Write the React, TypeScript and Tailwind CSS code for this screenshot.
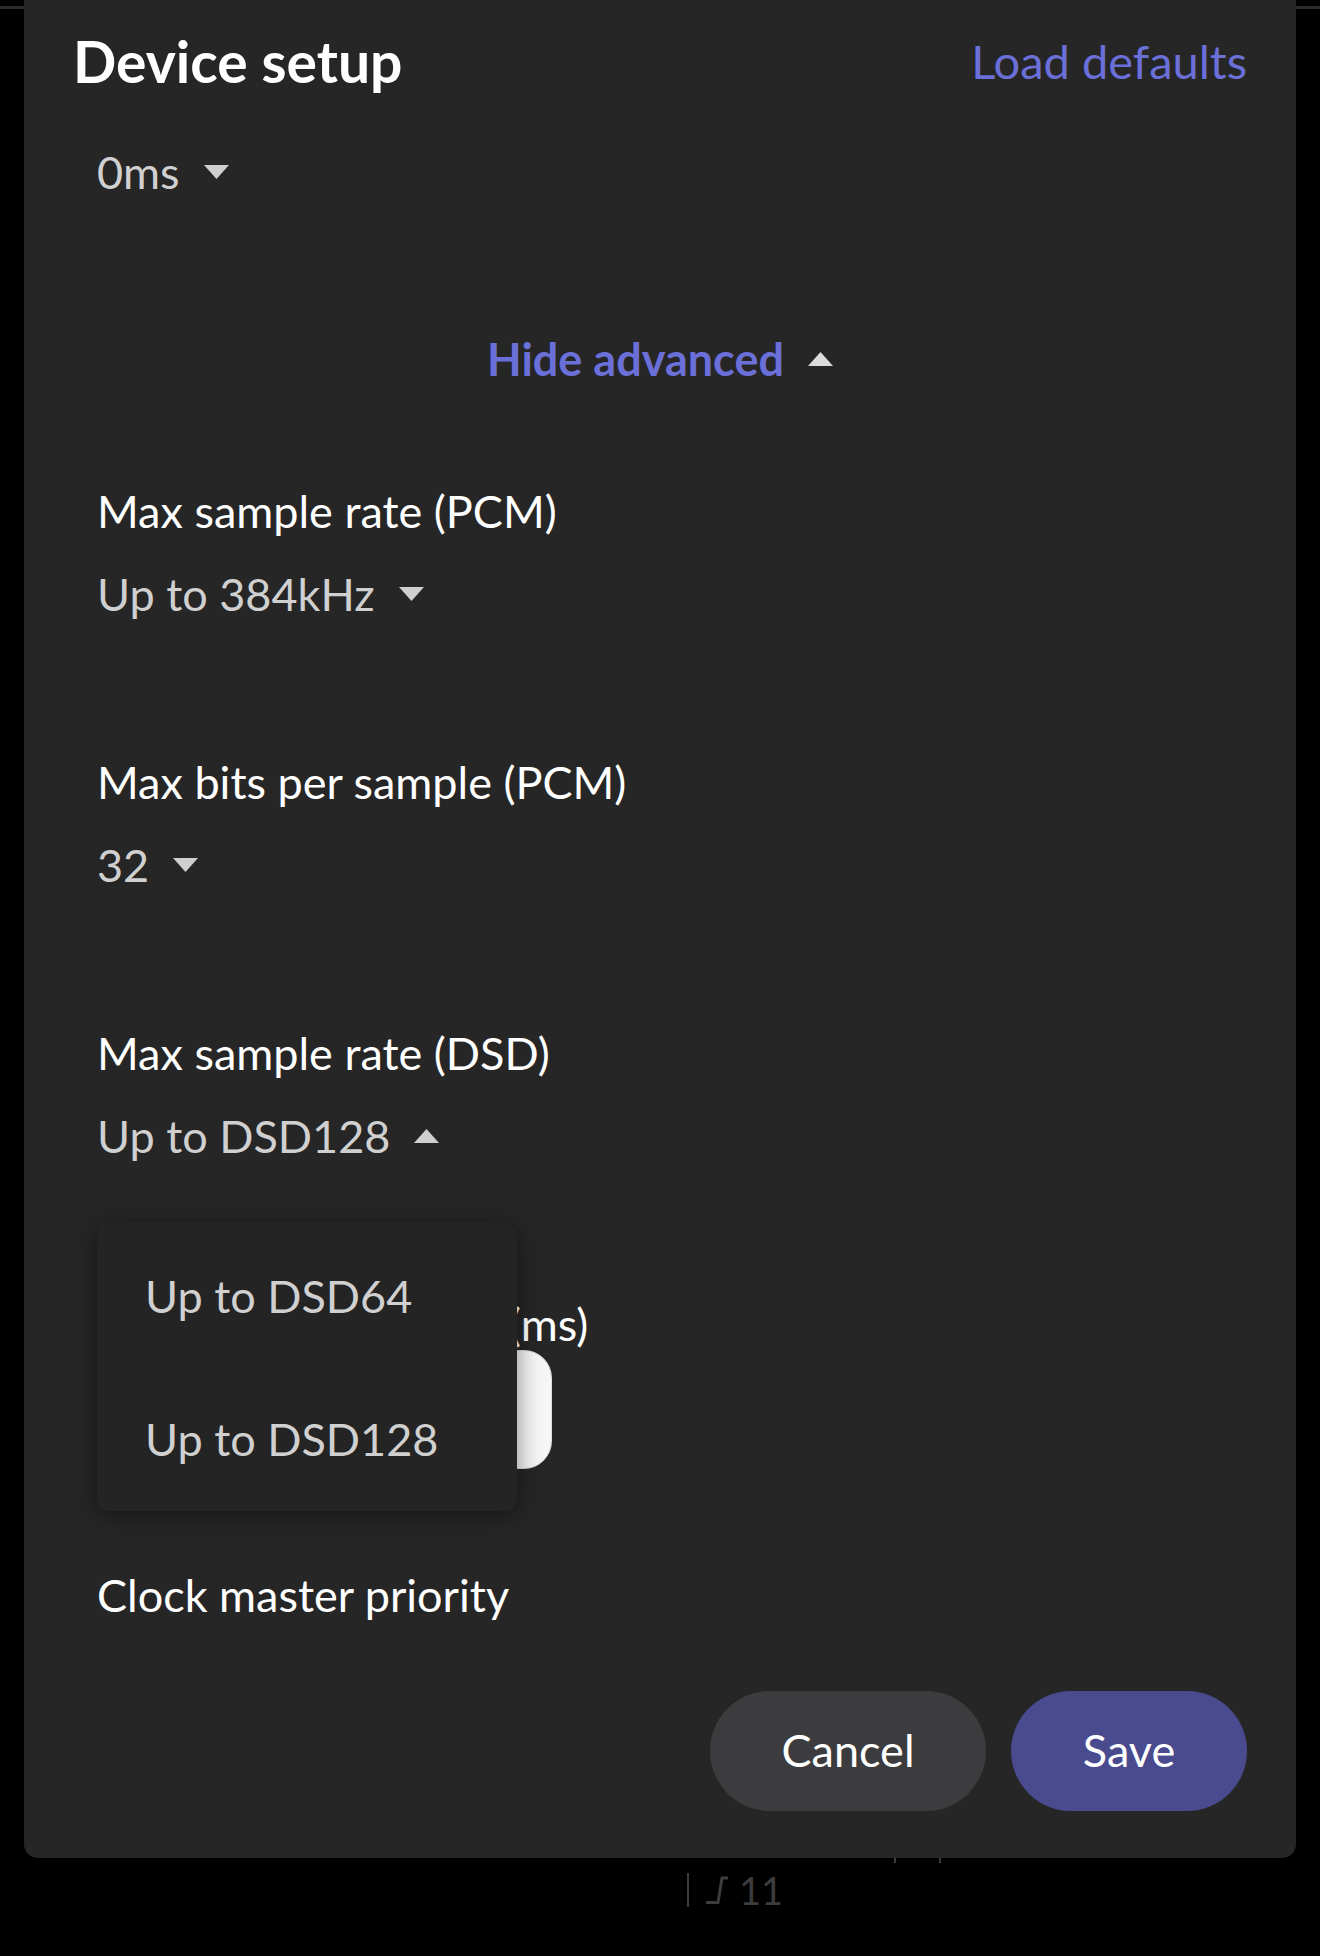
import React from "react";

const sections = [
  { label: "Max sample rate (PCM)", value: "Up to 384kHz", open: false },
  { label: "Max bits per sample (PCM)", value: "32", open: false },
  { label: "Max sample rate (DSD)", value: "Up to DSD128", open: true },
];

function Caret({ up = false }: { up?: boolean }) {
  return (
    <svg width="25" height="14" viewBox="0 0 25 14" className="shrink-0">
      {up ? (
        <polygon points="0,14 25,14 12.5,0" fill="#cfcfcf" />
      ) : (
        <polygon points="0,0 25,0 12.5,14" fill="#cfcfcf" />
      )}
    </svg>
  );
}

export default function App() {
  return (
    <div className="relative min-h-[1956px] w-[1320px] overflow-hidden bg-black font-['Lato','Noto_Sans',sans-serif]">

      {/* background app lines */}
      <div className="absolute left-0 top-[6px] h-[3px] w-[24px] bg-[#2a2a2a]" />
      <div className="absolute right-0 top-[6px] h-[3px] w-[24px] bg-[#2a2a2a]" />

      {/* Modal */}

      <div className="relative ml-[24px] h-[1858px] w-[1272px] rounded-b-[14px] bg-[#262626]">

        <div className="flex items-center justify-between px-[49px] pt-[33px]">
          <h1 className="text-[57px] font-bold leading-[56px] text-white">
            Device setup
          </h1>
          <button className="text-[47px] leading-[56px] text-[#6b6fd8]">
            Load defaults
          </button>
        </div>

        <div className="px-[73px] text-[45px] leading-[50px]">

          <div className="mt-[58px] flex h-[50px] items-center gap-[24px] text-[#d0d0d0]">
            <span>0ms</span>
            <Caret />
          </div>

          <div className="mt-[137px] flex h-[50px] items-center justify-center gap-[24px]">
            <span className="font-bold text-[#6b6fd8]">Hide advanced</span>
            <svg width="25" height="14" viewBox="0 0 25 14">
              <polygon points="0,14 25,14 12.5,0" fill="#dcdcdc" />
            </svg>
          </div>

          <div className="mt-[102px]">
            {sections.map((s) => (
              <div key={s.label} className="h-[271px]">
                <div className="text-white">{s.label}</div>
                <div className="mt-[33px] flex h-[50px] items-center gap-[24px] text-[#d0d0d0]">
                  <span>{s.value}</span>
                  <Caret up={s.open} />
                </div>
              </div>
            ))}

            <div className="h-[271px]">
              <div className="flex text-white">
                <span className="w-[412px] shrink-0">Resync delay</span>
                <span>(ms)</span>
              </div>
              <div className="mt-px h-[119px] w-[455px] rounded-[28px] border border-[#dcdcdc] bg-gradient-to-r from-[#e8e8e8] to-[#f6f6f6]" />
            </div>

            <div className="text-white">Clock master priority</div>
          </div>
        </div>

        {/* Buttons */}

        <div className="absolute bottom-[47px] right-[49px] flex gap-[25px] text-[45px]">
          <button className="h-[120px] w-[276px] rounded-full bg-[#3c3c3e] text-white">
            Cancel
          </button>
          <button className="h-[120px] w-[236px] rounded-full bg-[#4a4b8f] text-white">
            Save
          </button>
        </div>

        {/* Dropdown menu */}

        <div className="absolute left-[73px] top-[1223px] w-[420px] rounded-[12px] bg-[#242424] py-[1px] shadow-[0_4px_24px_rgba(0,0,0,0.45)]">
          {["Up to DSD64", "Up to DSD128"].map((o) => (
            <div key={o} className="flex h-[143px] items-center pl-[48px] text-[45px] leading-[50px] text-[#d0d0d0]">
              {o}
            </div>
          ))}
        </div>
      </div>

      {/* peeking background content */}

      <div className="absolute left-[894px] top-[1858px] h-[5px] w-[2px] bg-[#3c3c3c]" />
      <div className="absolute left-[939px] top-[1858px] h-[5px] w-[2px] bg-[#3c3c3c]" />

      <div className="absolute left-[687px] top-[1873px] flex items-center gap-[16px]">
        <div className="h-[34px] w-[2px] bg-[#3c3c3c]" />
        <div className="flex items-center gap-[10px]">
          <svg width="24" height="28" viewBox="0 0 24 28">
            <path d="M1 26.5 H13 L17 2 H23" stroke="#3c3c3c" strokeWidth="3" fill="none" />
          </svg>
          <span className="text-[38px] leading-[34px] text-[#3c3c3c]">11</span>
        </div>
      </div>
    </div>
  );
}
